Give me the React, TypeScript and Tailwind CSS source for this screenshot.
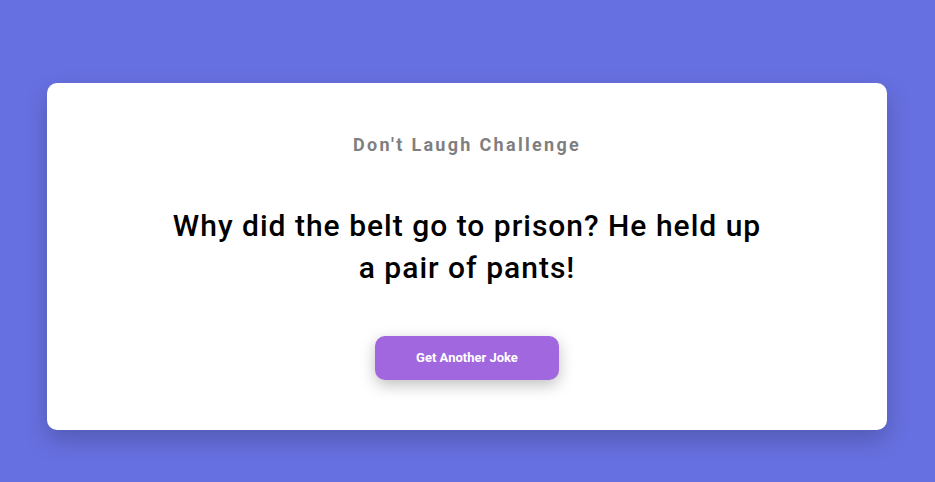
export default function App() {
  return (
    <div className="min-h-screen bg-[#6770e0] pt-[83px] pl-[47px] font-['Roboto',sans-serif]">
      <div className="w-[840px] rounded-[10px] bg-white px-10 pt-[48px] pb-[50px] text-center shadow-[0_10px_25px_rgba(0,0,0,0.2)]">
        <h1 className="text-[18px] font-bold tracking-[2.3px] text-[#7f7f7f]">Don't Laugh Challenge</h1>
        <p className="mx-auto mt-[47px] max-w-[600px] text-[30px] leading-[42px] font-medium tracking-[1px] text-black">
          Why did the belt go to prison? He held up a pair of pants!
        </p>
        <button className="mt-[47px] h-[44px] w-[184px] rounded-[10px] bg-[#a067df] text-[13px] font-bold text-white shadow-[0_5px_15px_rgba(0,0,0,0.25)]">
          Get Another Joke
        </button>
      </div>
    </div>
  );
}
